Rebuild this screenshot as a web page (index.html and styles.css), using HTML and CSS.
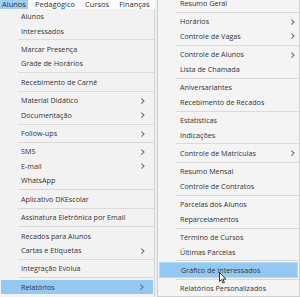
FILE: index.html
```html
<!DOCTYPE html>
<html lang="pt-BR">
<head>
  <meta charset="UTF-8">
  <title>Menu Alunos</title>
  <link rel="stylesheet" href="styles.css">
</head>
<body>
  <div class="screen">
    <div class="menubar">
      <span class="top-item active">Alunos</span>
      <span class="top-item">Pedagógico</span>
      <span class="top-item">Cursos</span>
      <span class="top-item">Finanças</span>
      <span class="top-item stub"></span>
    </div>

    <div class="menu main-menu">
      <div class="item">Alunos</div>
      <div class="item">Interessados</div>
      <div class="sep"></div>
      <div class="item">Marcar Presença</div>
      <div class="item">Grade de Horários</div>
      <div class="sep"></div>
      <div class="item">Recebimento de Carnê</div>
      <div class="sep"></div>
      <div class="item sub">Material Didático</div>
      <div class="item sub">Documentação</div>
      <div class="sep"></div>
      <div class="item sub">Follow-ups</div>
      <div class="sep"></div>
      <div class="item sub">SMS</div>
      <div class="item sub">E-mail</div>
      <div class="item">WhatsApp</div>
      <div class="sep"></div>
      <div class="item">Aplicativo DKEscolar</div>
      <div class="sep"></div>
      <div class="item">Assinatura Eletrônica por Email</div>
      <div class="sep"></div>
      <div class="item">Recados para Alunos</div>
      <div class="item sub">Cartas e Etiquetas</div>
      <div class="sep"></div>
      <div class="item">Integração Evolua</div>
      <div class="sep"></div>
      <div class="item sub selected">Relatórios</div>
    </div>

    <div class="menu sub-menu">
      <div class="item">Resumo Geral</div>
      <div class="sep"></div>
      <div class="item sub">Horários</div>
      <div class="item sub">Controle de Vagas</div>
      <div class="sep"></div>
      <div class="item sub">Controle de Alunos</div>
      <div class="item">Lista de Chamada</div>
      <div class="sep"></div>
      <div class="item">Aniversariantes</div>
      <div class="item">Recebimento de Recados</div>
      <div class="sep"></div>
      <div class="item">Estatísticas</div>
      <div class="item">Indicações</div>
      <div class="sep"></div>
      <div class="item sub">Controle de Matrículas</div>
      <div class="sep"></div>
      <div class="item">Resumo Mensal</div>
      <div class="item">Controle de Contratos</div>
      <div class="sep"></div>
      <div class="item">Parcelas dos Alunos</div>
      <div class="item">Reparcelamentos</div>
      <div class="sep"></div>
      <div class="item">Término de Cursos</div>
      <div class="item">Últimas Parcelas</div>
      <div class="sep"></div>
      <div class="item hover">Gráfico de Interessados</div>
      <div class="sep"></div>
      <div class="item">Relatórios Personalizados</div>
    </div>

    <svg class="cursor" width="8" height="12" viewBox="0 0 8 12">
      <path d="M0.5 0.5 L0.5 9.5 L2.6 7.6 L4.1 11 L5.4 10.4 L3.9 7.1 L6.8 7.1 Z" fill="#fff" stroke="#222" stroke-width="0.9" stroke-linejoin="round"/>
    </svg>
  </div>
</body>
</html>
```

FILE: styles.css
```css
body {
  margin: 0;
  background: #f0f0f0;
  font-family: "Open Sans", "Noto Sans", Arial, sans-serif;
  font-size: 7.2px;
  color: #333;
}
.screen {
  position: relative;
  width: 300px;
  height: 297px;
  overflow: hidden;
  background: #f7f7f7;
}
.menubar {
  display: flex;
  height: 9px;
  background: #fbfbfb;
  line-height: 8px;
}
.top-item {
  padding: 0 2px;
  margin-right: 6px;
  font-size: 7.5px;
}
.top-item.active {
  background: #9fcdf2;
  padding: 0 2px 0 2px;
  margin-right: 5px;
}
.top-item.stub {
  width: 2px;
  height: 7px;
  padding: 0;
  margin-left: 3px;
  background: #8a8a8a;
}
.menu {
  background: #f2f2f2;
  border: 1px solid #d4d4d4;
}
.main-menu {
  width: 155px;
  height: 300px;
  box-sizing: border-box;
  border-left: none;
  border-top: none;
}
.sub-menu {
  position: absolute;
  left: 157px;
  top: -5px;
  width: 141px;
  background: #f4f4f4;
  border-color: #cfcfcf;
  box-shadow: -1px 0 2px rgba(0,0,0,0.08);
}
.item {
  position: relative;
  height: 14.5px;
  line-height: 14.5px;
  padding-left: 21px;
  white-space: nowrap;
}
.sub-menu .item {
  padding-left: 22px;
}
.item.sub::after {
  content: "";
  position: absolute;
  right: 11px;
  top: 5.5px;
  width: 2.5px;
  height: 2.5px;
  border-right: 1px solid #666;
  border-top: 1px solid #666;
  transform: rotate(45deg);
}
.sub-menu .item.sub::after {
  right: 6px;
}
.item.selected {
  background: #95c8f1;
  margin: 0 1px;
  padding-left: 20px;
}
.item.hover {
  background: #95c8f1;
  border: 1px solid #b5d9f5;
  margin: -1px 1px;
  padding-left: 21px;
}
.sep {
  height: 1px;
  margin: 1.45px 0 1.45px 18px;
  background: #dadada;
}
.cursor {
  position: absolute;
  left: 219px;
  top: 272px;
}
```
